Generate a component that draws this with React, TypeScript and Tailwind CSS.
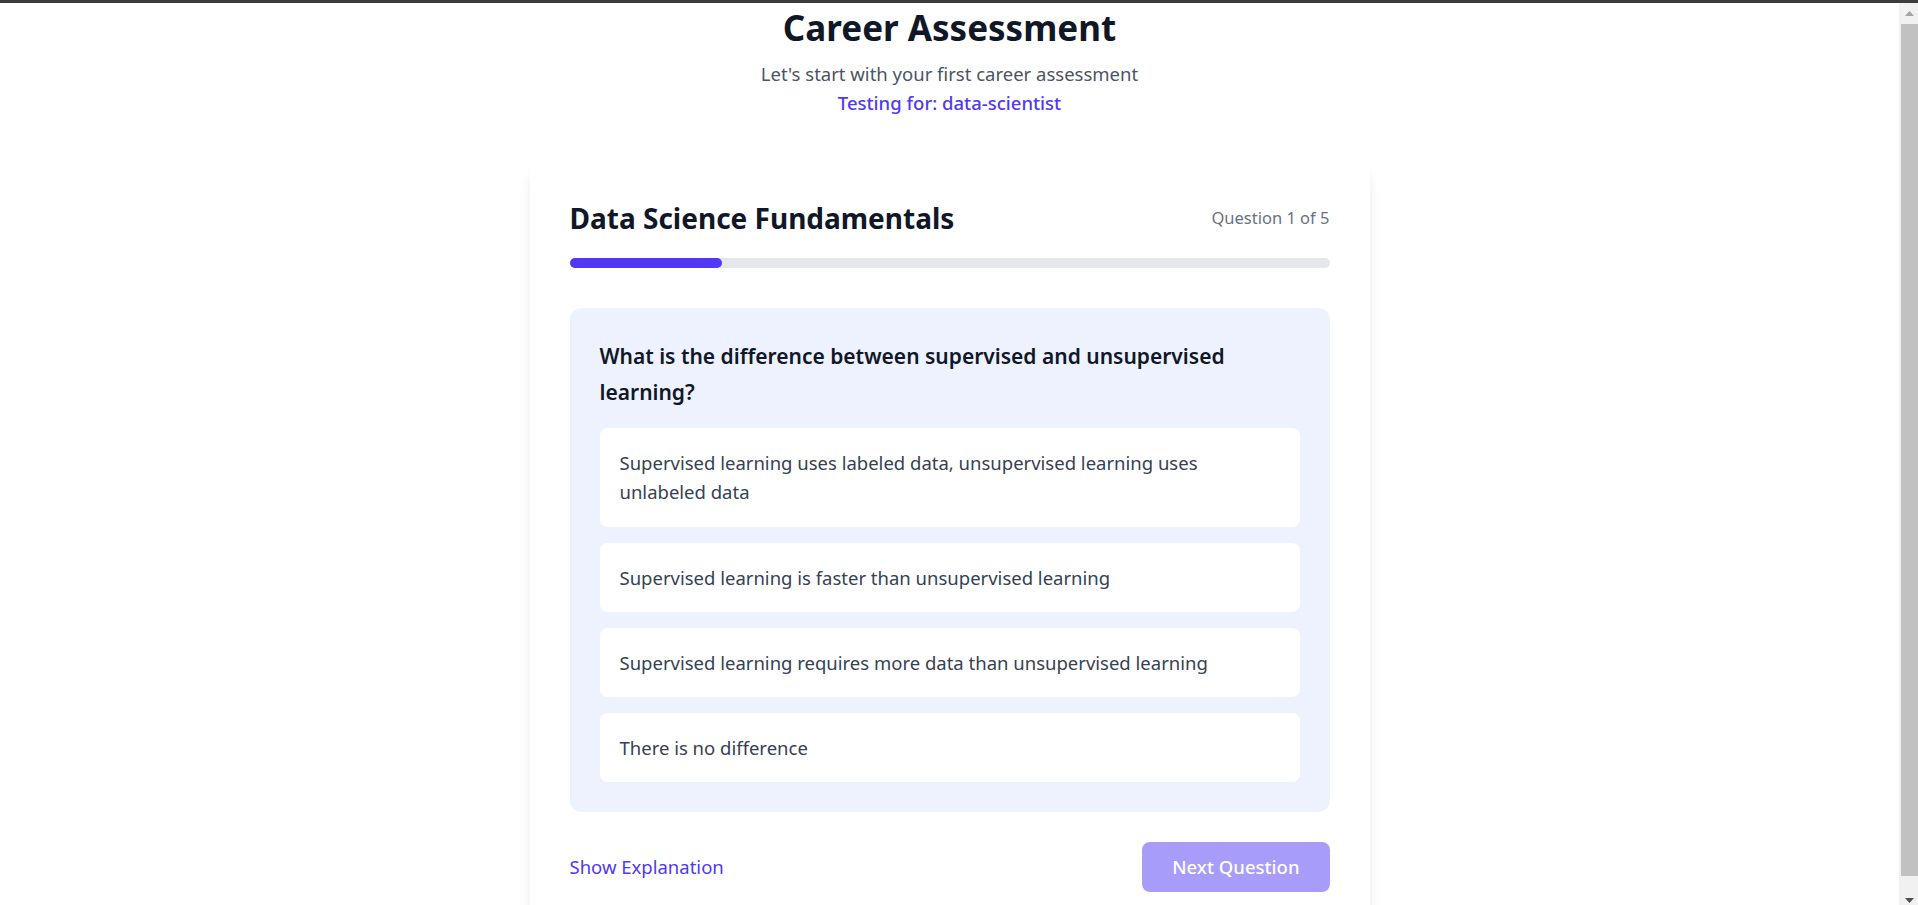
import React from "react";

const options = [
  "Supervised learning uses labeled data, unsupervised learning uses unlabeled data",
  "Supervised learning is faster than unsupervised learning",
  "Supervised learning requires more data than unsupervised learning",
  "There is no difference",
];

function Scrollbar() {
  return (
    <div className="w-[19px] shrink-0 bg-[#f1f1f1] flex flex-col pl-[2px]">
      <div className="h-[21px] flex items-center justify-center">
        <svg width="9" height="5" viewBox="0 0 9 5">
          <path d="M4.5 0 L9 5 L0 5 Z" fill="#a3a3a3" />
        </svg>
      </div>
      <div className="flex-1 bg-[#c1c1c1]" />
      <div className="h-[29px] flex items-end justify-center pb-[2px]">
        <svg width="9" height="5" viewBox="0 0 9 5">
          <path d="M0 0 L9 0 L4.5 5 Z" fill="#505050" />
        </svg>
      </div>
    </div>
  );
}

export default function App() {
  return (
    <div className="h-[905px] flex flex-col overflow-hidden bg-white font-['Noto_Sans',sans-serif]">
      <div className="h-[3px] shrink-0 bg-[#3c3c3c]" />
      <div className="flex-1 flex min-h-0">
        <main className="flex-1 min-w-0 overflow-hidden flex flex-col items-center pt-[5px]">
          <h1 className="text-[35px] leading-10 font-bold text-gray-900 text-center">Career Assessment</h1>
          <p className="mt-3 text-[18.5px] leading-7 text-gray-600 text-center">Let's start with your first career assessment</p>
          <p className="mt-[1px] text-[18.5px] leading-7 font-medium text-indigo-600 text-center">Testing for: data-scientist</p>

          <div className="mt-[43px] w-[840px] shrink-0 bg-white rounded-xl shadow-lg p-10">
            <div className="flex items-center justify-between">
              <h2 className="text-[28px] leading-9 font-bold text-gray-900">Data Science Fundamentals</h2>
              <span className="text-[16.5px] text-gray-500">Question 1 of 5</span>
            </div>
            <div className="mt-[22px] h-2.5 w-full rounded-full bg-gray-200">
              <div className="h-full w-1/5 rounded-full bg-indigo-600" />
            </div>

            <div className="mt-10 bg-indigo-50 rounded-xl p-[30px]">
              <h3 className="text-[21px] leading-9 font-semibold text-gray-900 mb-[18px]">
                What is the difference between supervised and unsupervised learning?
              </h3>
              <div className="flex flex-col gap-4">
                {options.map((o) => (
                  <div key={o} className="bg-white rounded-lg p-5 text-[18.5px] leading-[29.25px] text-gray-700">
                    {o}
                  </div>
                ))}
              </div>
            </div>

            <div className="mt-[30px] flex items-center justify-between">
              <button className="text-[18.5px] leading-7 text-indigo-600">Show Explanation</button>
              <button className="h-[50px] px-[30px] rounded-lg bg-indigo-600/50 text-white text-[18.5px] leading-7 font-medium">
                Next Question
              </button>
            </div>
          </div>
        </main>
        <Scrollbar />
      </div>
    </div>
  );
}
